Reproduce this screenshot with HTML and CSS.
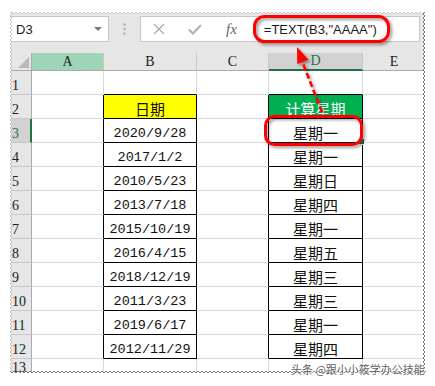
FILE: index.html
```html
<!DOCTYPE html>
<html lang="zh-CN">
<head>
    <meta charset="UTF-8">
    <title>TEXT 计算星期</title>
    <link rel="stylesheet" href="styles.css">
</head>
<body>
    <div class="sheet">
        <div class="fbar">
            <div class="namebox">
                <span>D3</span>
                <span class="drop"></span>
            </div>
            <div class="sep">
                <svg width="3" height="12" viewBox="0 0 3 12"><circle cx="1.5" cy="1.5" r="1.2" fill="#b0b0b0"/><circle cx="1.5" cy="6" r="1.2" fill="#b0b0b0"/><circle cx="1.5" cy="10.5" r="1.2" fill="#b0b0b0"/></svg>
            </div>
            <div class="formula">
                <svg class="ico-x" width="12" height="12" viewBox="0 0 12 12"><path d="M1 1L11 11M11 1L1 11" stroke="#ababab" stroke-width="1.3"/></svg>
                <svg class="ico-ok" width="14" height="11" viewBox="0 0 14 11"><path d="M1 5.5L5 9.5L13 1" fill="none" stroke="#b4b4b4" stroke-width="2.2"/></svg>
                <span class="fx">fx</span>
                <span class="ftext">=TEXT(B3,"AAAA")</span>
            </div>
        </div>

        <div class="grid">
            <div class="corner"><svg width="11" height="11" viewBox="0 0 11 11"><polygon points="11,0 11,11 0,11" fill="#b9b9b9"/></svg></div>
            <div class="colhead sel-a">A</div>
            <div class="colhead">B</div>
            <div class="colhead">C</div>
            <div class="colhead active">D</div>
            <div class="colhead">E</div>

            <div class="rowhead">1</div>
            <div class="cell"></div>
            <div class="cell k-b"></div>
            <div class="cell"></div>
            <div class="cell k-b"></div>
            <div class="cell"></div>

            <div class="rowhead">2</div>
            <div class="cell k-r"></div>
            <div class="cell k-r k-b wk hd-yellow">日期</div>
            <div class="cell k-r"></div>
            <div class="cell k-r k-b wk hd-green">计算星期</div>
            <div class="cell"></div>

            <div class="rowhead active">3</div>
            <div class="cell k-r"></div>
            <div class="cell k-r k-b date">2020/9/28</div>
            <div class="cell k-r"></div>
            <div class="cell k-r k-b wk current">星期一</div>
            <div class="cell"></div>

            <div class="rowhead">4</div>
            <div class="cell k-r"></div>
            <div class="cell k-r k-b date">2017/1/2</div>
            <div class="cell k-r"></div>
            <div class="cell k-r k-b wk">星期一</div>
            <div class="cell"></div>

            <div class="rowhead">5</div>
            <div class="cell k-r"></div>
            <div class="cell k-r k-b date">2010/5/23</div>
            <div class="cell k-r"></div>
            <div class="cell k-r k-b wk">星期日</div>
            <div class="cell"></div>

            <div class="rowhead">6</div>
            <div class="cell k-r"></div>
            <div class="cell k-r k-b date">2013/7/18</div>
            <div class="cell k-r"></div>
            <div class="cell k-r k-b wk">星期四</div>
            <div class="cell"></div>

            <div class="rowhead">7</div>
            <div class="cell k-r"></div>
            <div class="cell k-r k-b date">2015/10/19</div>
            <div class="cell k-r"></div>
            <div class="cell k-r k-b wk">星期一</div>
            <div class="cell"></div>

            <div class="rowhead">8</div>
            <div class="cell k-r"></div>
            <div class="cell k-r k-b date">2016/4/15</div>
            <div class="cell k-r"></div>
            <div class="cell k-r k-b wk">星期五</div>
            <div class="cell"></div>

            <div class="rowhead">9</div>
            <div class="cell k-r"></div>
            <div class="cell k-r k-b date">2018/12/19</div>
            <div class="cell k-r"></div>
            <div class="cell k-r k-b wk">星期三</div>
            <div class="cell"></div>

            <div class="rowhead">10</div>
            <div class="cell k-r"></div>
            <div class="cell k-r k-b date">2011/3/23</div>
            <div class="cell k-r"></div>
            <div class="cell k-r k-b wk">星期三</div>
            <div class="cell"></div>

            <div class="rowhead">11</div>
            <div class="cell k-r"></div>
            <div class="cell k-r k-b date">2019/6/17</div>
            <div class="cell k-r"></div>
            <div class="cell k-r k-b wk">星期一</div>
            <div class="cell"></div>

            <div class="rowhead">12</div>
            <div class="cell k-r"></div>
            <div class="cell k-r k-b date">2012/11/29</div>
            <div class="cell k-r"></div>
            <div class="cell k-r k-b wk">星期四</div>
            <div class="cell"></div>

            <div class="rowhead">13</div>
            <div class="cell"></div>
            <div class="cell"></div>
            <div class="cell"></div>
            <div class="cell"></div>
            <div class="cell"></div>
        </div>
    </div>

    <!-- torn paper edges + red callouts drawn over the sheet -->
    <svg class="overlay" width="435" height="386" viewBox="0 0 435 386">
        <defs>
            <pattern id="tear-r" x="422" y="0" width="6" height="4" patternUnits="userSpaceOnUse">
                <path d="M3 0L1 2L3 4H6V0Z" fill="#fff"/>
                <path d="M3 0L1 2L3 4" fill="none" stroke="#6a6a6a" stroke-width="0.9"/>
            </pattern>
            <pattern id="tear-b" x="0" y="370" width="4" height="6" patternUnits="userSpaceOnUse">
                <path d="M0 3L2 1L4 3V6H0Z" fill="#fff"/>
                <path d="M0 3L2 1L4 3" fill="none" stroke="#6a6a6a" stroke-width="0.9"/>
            </pattern>
            <pattern id="tear-l" x="7" y="0" width="6" height="4" patternUnits="userSpaceOnUse">
                <path d="M0 0H3L5 2L3 4H0Z" fill="#fff"/>
                <path d="M3 0L5 2L3 4" fill="none" stroke="#bcbcbc" stroke-width="0.8"/>
            </pattern>
            <pattern id="tear-t" x="0" y="9" width="4" height="6" patternUnits="userSpaceOnUse">
                <path d="M0 0H4V3L2 5L0 3Z" fill="#fff"/>
                <path d="M0 3L2 5L4 3" fill="none" stroke="#c4c4c4" stroke-width="0.8"/>
            </pattern>
            <filter id="shade" x="-20%" y="-20%" width="140%" height="140%">
                <feDropShadow dx="2" dy="2" stdDeviation="1.6" flood-color="#000" flood-opacity="0.4"/>
            </filter>
        </defs>

        <rect x="7" y="9" width="421" height="6" fill="url(#tear-t)"/>
        <rect x="7" y="12" width="6" height="364" fill="url(#tear-l)"/>
        <rect x="422" y="12" width="6" height="364" fill="url(#tear-r)"/>
        <rect x="10" y="370" width="416" height="6" fill="url(#tear-b)"/>

        <g filter="url(#shade)">
            <rect x="254.5" y="16.5" width="134" height="25" rx="10" fill="none" stroke="#f00" stroke-width="3"/>
            <rect x="265.5" y="116.5" width="96" height="28" rx="9" fill="none" stroke="#f00" stroke-width="3"/>
            <line x1="322" y1="112" x2="302" y2="61" stroke="#f00" stroke-width="2.6" stroke-dasharray="6 3"/>
            <polygon points="297,47 308.5,59.7 297.3,64.1" fill="#f00"/>
        </g>
    </svg>

    <div class="mark">头条 @跟小小筱学办公技能</div>
</body>
</html>
```

FILE: styles.css
```css
* {
    box-sizing: border-box;
}
body {
    margin: 0;
    width: 435px;
    height: 386px;
    overflow: hidden;
    position: relative;
    background-color: #fff;
    font-family: "Liberation Sans", Arial, sans-serif;
}
.sheet {
    margin: 12px 0 0 10px;
    width: 416px;
    height: 363px;
    background-color: #e6e6e6;
    overflow: hidden;
}

/* formula bar */
.fbar {
    display: flex;
    align-items: flex-start;
    height: 41px;
    padding-top: 4px;
}
.namebox {
    width: 99px;
    height: 26px;
    background-color: #fff;
    border: 1px solid #c6c6c6;
    display: flex;
    align-items: center;
    justify-content: space-between;
    padding: 0 6px 0 5px;
    font-size: 13px;
    color: #222;
}
.drop {
    width: 0;
    height: 0;
    border-left: 4px solid transparent;
    border-right: 4px solid transparent;
    border-top: 4px solid #7a7a7a;
}
.sep {
    width: 31px;
    height: 26px;
    display: flex;
    align-items: center;
    justify-content: center;
}
.formula {
    width: 280px;
    height: 26px;
    background-color: #fff;
    border: 1px solid #c6c6c6;
    display: flex;
    align-items: center;
}
.ico-x {
    margin-left: 12px;
}
.ico-ok {
    margin-left: 23px;
}
.fx {
    margin-left: 24px;
    font-family: "Liberation Serif", serif;
    font-style: italic;
    font-size: 15px;
    color: #666;
}
.ftext {
    margin-left: 27px;
    font-size: 13px;
    color: #1a1a1a;
}

/* sheet grid */
.grid {
    display: grid;
    grid-template-columns: 22px 72px 93px 72px 94px 1fr;
    grid-template-rows: 18px repeat(12, 24px) 1fr;
    height: 322px;
}
.corner {
    background-color: #e6e6e6;
    border-right: 1px solid #ababab;
    border-bottom: 1px solid #ababab;
    display: flex;
    align-items: flex-end;
    justify-content: flex-end;
    padding: 0 2px 2px 0;
}
.colhead {
    background-color: #e6e6e6;
    border-right: 1px solid #c8c8c8;
    border-bottom: 1px solid #ababab;
    display: flex;
    align-items: center;
    justify-content: center;
    font-family: "Liberation Serif", serif;
    font-size: 14px;
    color: #222;
}
.colhead.sel-a {
    background-color: #9fd5b7;
}
.colhead.active {
    background-color: #d2d2d2;
    border-bottom: 2px solid #217346;
    color: #217346;
}
.rowhead {
    background-color: #e6e6e6;
    border-right: 1px solid #ababab;
    border-bottom: 1px solid #c8c8c8;
    display: flex;
    align-items: flex-end;
    padding-left: 2px;
    font-family: "Liberation Serif", serif;
    font-size: 14px;
    line-height: 17px;
    color: #222;
}
.rowhead.active {
    background-color: #d2d2d2;
    border-right: 2px solid #217346;
    color: #217346;
}
.cell {
    background-color: #fff;
    border-right: 1px solid #d8d8d8;
    border-bottom: 1px solid #d8d8d8;
    display: flex;
    align-items: flex-end;
    justify-content: center;
    color: #111;
}
.cell.k-r {
    border-right-color: #000;
}
.cell.k-b {
    border-bottom-color: #000;
}
.date {
    font-family: "Liberation Mono", monospace;
    font-size: 13.5px;
    line-height: 16px;
}
.wk {
    font-family: "Noto Sans CJK SC", sans-serif;
    font-size: 15px;
    line-height: 19px;
}
.hd-yellow {
    background-color: #ffff00;
}
.hd-green {
    background-color: #00b050;
    color: #fff;
}
.current {
    position: relative;
}
.current::after {
    content: "";
    position: absolute;
    right: -3px;
    bottom: -3px;
    width: 5px;
    height: 5px;
    background-color: #217346;
    border: 1px solid #fff;
}

/* overlays */
.overlay {
    position: absolute;
    top: 0;
    left: 0;
    pointer-events: none;
}
.mark {
    position: absolute;
    left: 291px;
    top: 362px;
    font-family: "Noto Sans CJK SC", sans-serif;
    font-size: 11px;
    line-height: 14px;
    color: rgba(50, 50, 50, 0.8);
    text-shadow: 0 0 2px #fff, 1px 1px 1px #fff;
    white-space: nowrap;
}
```
